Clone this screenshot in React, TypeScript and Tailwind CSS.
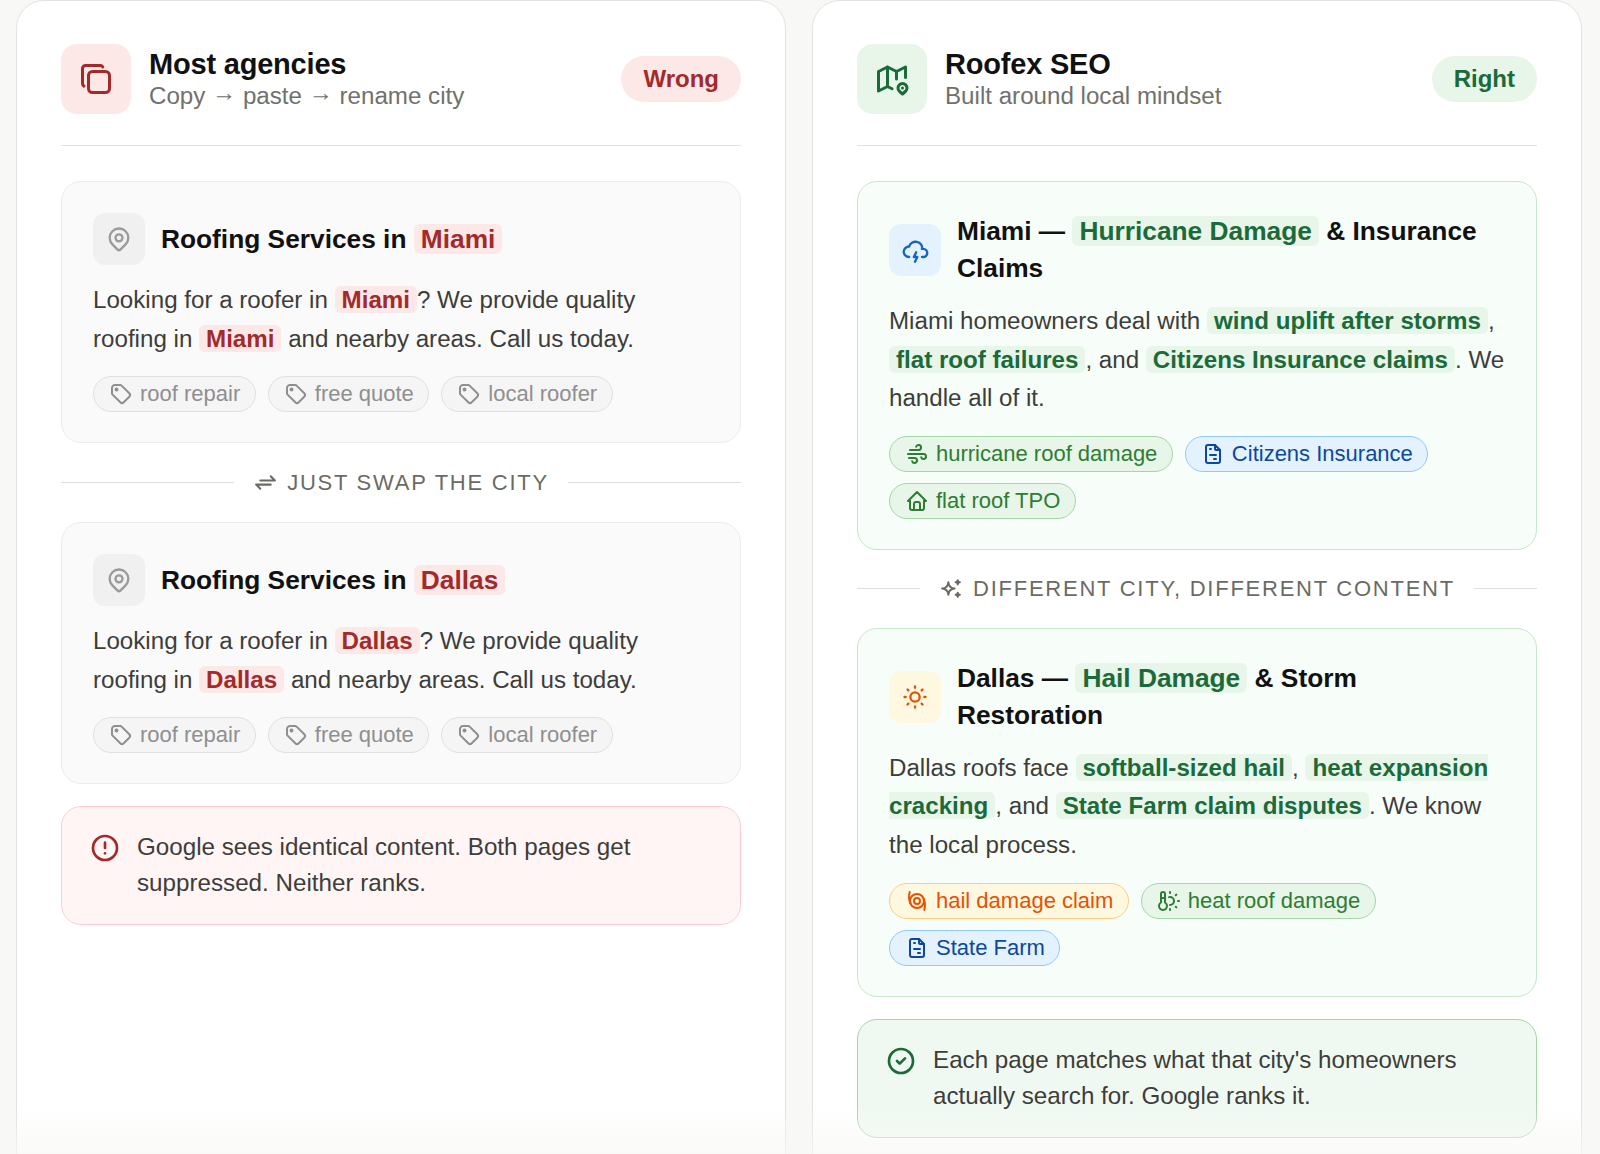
import React from "react";
import {
  TbAlertCircle,
  TbCircleCheck,
  TbCloudStorm,
  TbCopy,
  TbFileInvoice,
  TbHome,
  TbMapPin,
  TbMapPin2,
  TbSparkles,
  TbStorm,
  TbSun,
  TbTag,
  TbTemperatureSun,
  TbWind,
  TbArrowsExchange,
} from "react-icons/tb";

type Tone = "gray" | "green" | "blue" | "orange";

const toneClass: Record<Tone, string> = {
  gray: "bg-[#f5f5f5] border-[#e0e0e0] text-[#8f8f8f]",
  green: "bg-[#e8f5e9] border-[#a5d6a7] text-[#2e7d32]",
  blue: "bg-[#e3f2fd] border-[#90caf9] text-[#0d47a1]",
  orange: "bg-[#fff8e1] border-[#ffcc80] text-[#e65100]",
};

function Tag({ icon, label, tone }: { icon: React.ReactNode; label: string; tone: Tone }) {
  return (
    <span className={`flex h-9 items-center gap-[7px] rounded-full border pr-[14.5px] pl-[15px] text-[22px] leading-none ${toneClass[tone]}`}>
      {icon}
      {label}
    </span>
  );
}

function Bad({ children }: { children: React.ReactNode }) {
  return <span className="rounded-md bg-[#fde8e8] px-[7px] font-bold text-[#a32a2a]">{children}</span>;
}

function Good({ children }: { children: React.ReactNode }) {
  return <span className="rounded-md bg-[#e8f5e9] px-[7px] font-bold text-[#1b6b3a]">{children}</span>;
}

function Arrow() {
  return <span className="align-[3px] leading-[20px]">→</span>;
}

function Divider({ icon, label, heightClass }: { icon: React.ReactNode; label: string; heightClass: string }) {
  return (
    <div className={`flex items-center gap-[19px] ${heightClass}`}>
      <div className="h-px flex-1 bg-[#dedede]" />
      <span className="flex items-center gap-[9px] text-[22px] leading-none tracking-[1.75px] text-[#6b6b63]">
        {icon}
        {label}
      </span>
      <div className="h-px flex-1 bg-[#dedede]" />
    </div>
  );
}

function Header({
  icon,
  title,
  sub,
  badge,
  boxClass,
  badgeClass,
}: {
  icon: React.ReactNode;
  title: string;
  sub: React.ReactNode;
  badge: string;
  boxClass: string;
  badgeClass: string;
}) {
  return (
    <header className="mb-[35px] flex items-center gap-[18px] border-b border-[#e2e2e2] pb-[31px]">
      <div className={`flex h-[70px] w-[70px] shrink-0 items-center justify-center rounded-2xl ${boxClass}`}>{icon}</div>
      <div className="flex-1 pb-px">
        <h2 className="text-[29px] leading-[35px] font-bold tracking-[-0.2px] text-[#111]">{title}</h2>
        <p className="text-[24.15px] leading-[28px] text-[#71716b]">{sub}</p>
      </div>
      <span className={`flex h-[46px] items-center rounded-full px-[22px] text-[24px] font-bold ${badgeClass}`}>{badge}</span>
    </header>
  );
}

function CopyCard({ city }: { city: string }) {
  return (
    <div className="rounded-[20px] border border-[#ececec] bg-[#fafafa] px-[31px] pt-[31px] pb-[30px]">
      <div className="mb-4 flex items-center gap-4">
        <div className="flex h-[52px] w-[52px] shrink-0 items-center justify-center rounded-xl bg-[#f0f0f0]">
          <TbMapPin className="h-7 w-7 text-[#9a9a9a]" />
        </div>
        <h3 className="text-[26.3px] leading-[37px] font-bold text-[#111]">
          Roofing Services in <Bad>{city}</Bad>
        </h3>
      </div>
      <p className="text-[24.15px] leading-[38.6px] text-[#3d3d3a]">
        Looking for a roofer in <Bad>{city}</Bad>? We provide quality roofing in <Bad>{city}</Bad> and nearby areas. Call us today.
      </p>
      <div className="mt-[18px] flex flex-wrap gap-3">
        <Tag tone="gray" label="roof repair" icon={<TbTag className="h-[24px] w-[24px]" />} />
        <Tag tone="gray" label="free quote" icon={<TbTag className="h-[24px] w-[24px]" />} />
        <Tag tone="gray" label="local roofer" icon={<TbTag className="h-[24px] w-[24px]" />} />
      </div>
    </div>
  );
}

function LocalCard({
  icon,
  boxClass,
  title,
  body,
  tags,
}: {
  icon: React.ReactNode;
  boxClass: string;
  title: React.ReactNode;
  body: React.ReactNode;
  tags: React.ReactNode;
}) {
  return (
    <div className="rounded-[20px] border border-[#c8e6c9] bg-[#f7fdf9] px-[31px] pt-[31px] pb-[30px]">
      <div className="mb-[15px] flex items-center gap-4">
        <div className={`flex h-[52px] w-[52px] shrink-0 items-center justify-center rounded-xl ${boxClass}`}>{icon}</div>
        <h3 className="text-[26.3px] leading-[37px] font-bold text-[#111]">{title}</h3>
      </div>
      <p className="text-[24.15px] leading-[38.6px] text-[#3d3d3a]">{body}</p>
      <div className="mt-[18px] flex flex-wrap gap-x-3 gap-y-[11px]">{tags}</div>
    </div>
  );
}

const tagIcon = "h-[24px] w-[24px]";

export default function App() {
  return (
    <div className="relative h-[1154px] overflow-hidden bg-[#f8f8f6] pr-[18px] pl-4 font-['Liberation_Sans',Arial,sans-serif]">
      <div className="grid grid-cols-2 gap-[26px]">
        {/* left column */}
        <section className="h-[1180px] rounded-[28px] border border-[#e2e2e0] bg-white px-[44px] pt-[43px]">
          <Header
            icon={<TbCopy className="h-9 w-9 text-[#a32a2a]" />}
            title="Most agencies"
            sub={
              <>
                Copy <Arrow /> paste <Arrow /> rename city
              </>
            }
            badge="Wrong"
            boxClass="bg-[#fde8e8]"
            badgeClass="bg-[#fde8e8] text-[#a32a2a]"
          />
          <CopyCard city="Miami" />
          <Divider heightClass="h-[79px]" icon={<TbArrowsExchange className="h-[25px] w-[25px]" />} label="JUST SWAP THE CITY" />
          <CopyCard city="Dallas" />
          <div className="mt-[22px] flex gap-4 rounded-[20px] border border-[#ffcdd2] bg-[#fff5f5] px-[27px] pt-[22px] pb-[23px]">
            <TbAlertCircle className="mt-[3px] h-8 w-8 shrink-0 text-[#a32a2a]" />
            <p className="text-[24.2px] leading-[36px] text-[#3d3d3a]">Google sees identical content. Both pages get suppressed. Neither ranks.</p>
          </div>
        </section>

        {/* right column */}
        <section className="h-[1180px] rounded-[28px] border border-[#e2e2e0] bg-white px-[44px] pt-[43px]">
          <Header
            icon={<TbMapPin2 className="h-9 w-9 text-[#1b6b3a]" />}
            title="Roofex SEO"
            sub="Built around local mindset"
            badge="Right"
            boxClass="bg-[#e8f5e9]"
            badgeClass="bg-[#e8f5e9] text-[#1b6b3a]"
          />
          <LocalCard
            icon={<TbCloudStorm className="h-7 w-7 text-[#1565c0]" />}
            boxClass="bg-[#e3f2fd]"
            title={
              <>
                Miami — <Good>Hurricane Damage</Good> &amp; Insurance Claims
              </>
            }
            body={
              <>
                Miami homeowners deal with <Good>wind uplift after storms</Good>, <Good>flat roof failures</Good>, and <Good>Citizens Insurance claims</Good>. We handle all of it.
              </>
            }
            tags={
              <>
                <Tag tone="green" label="hurricane roof damage" icon={<TbWind className={tagIcon} />} />
                <Tag tone="blue" label="Citizens Insurance" icon={<TbFileInvoice className={tagIcon} />} />
                <Tag tone="green" label="flat roof TPO" icon={<TbHome className={tagIcon} />} />
              </>
            }
          />
          <Divider heightClass="h-[78px]" icon={<TbSparkles className="h-[25px] w-[25px]" />} label="DIFFERENT CITY, DIFFERENT CONTENT" />
          <LocalCard
            icon={<TbSun className="h-7 w-7 text-[#e65100]" />}
            boxClass="bg-[#fff8e1]"
            title={
              <>
                Dallas — <Good>Hail Damage</Good> &amp; Storm Restoration
              </>
            }
            body={
              <>
                Dallas roofs face <Good>softball-sized hail</Good>, <Good>heat expansion cracking</Good>, and <Good>State Farm claim disputes</Good>. We know the local process.
              </>
            }
            tags={
              <>
                <Tag tone="orange" label="hail damage claim" icon={<TbStorm className={tagIcon} />} />
                <Tag tone="green" label="heat roof damage" icon={<TbTemperatureSun className={tagIcon} />} />
                <Tag tone="blue" label="State Farm" icon={<TbFileInvoice className={tagIcon} />} />
              </>
            }
          />
          <div className="mt-[22px] flex gap-4 rounded-[20px] border border-[#a5d6a7] bg-[#f0f9f1] px-[27px] pt-[22px] pb-[23px]">
            <TbCircleCheck className="mt-[3px] h-8 w-8 shrink-0 text-[#1b6b3a]" />
            <p className="text-[24.2px] leading-[36.4px] text-[#3d3d3a]">Each page matches what that city's homeowners actually search for. Google ranks it.</p>
          </div>
        </section>
      </div>
      {/* soft fade over the bottom edge */}
      <div className="pointer-events-none absolute inset-x-0 bottom-0 h-12 bg-gradient-to-b from-transparent to-[#f8f8f6]/70" />
    </div>
  );
}
